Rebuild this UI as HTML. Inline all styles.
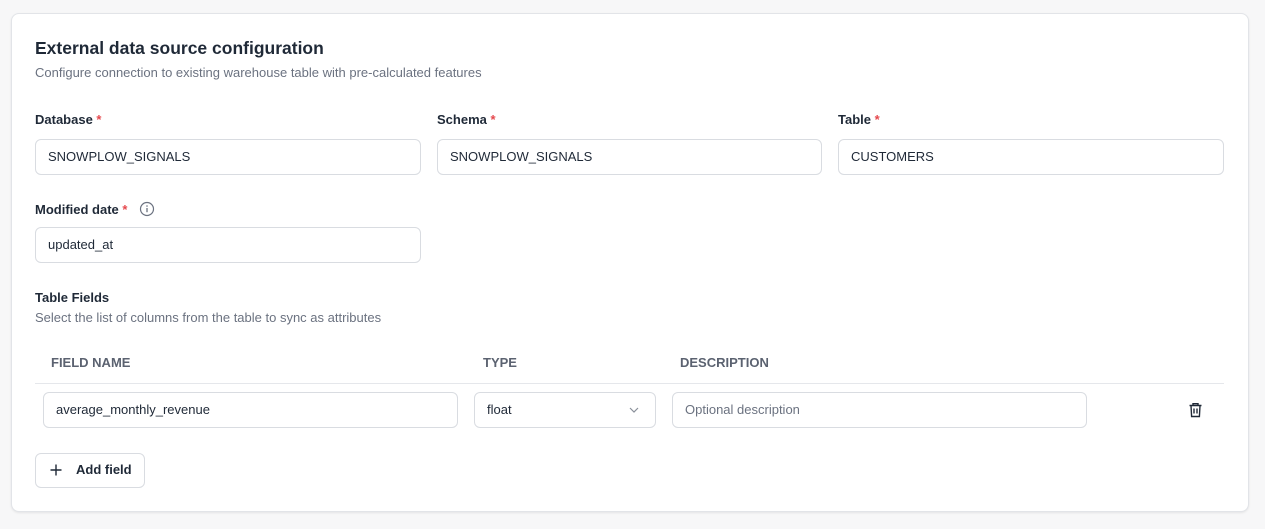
<!DOCTYPE html>
<html><head><style>
*{box-sizing:border-box;margin:0;padding:0}
body{width:1265px;height:529px;background:#f7f7f8;font-family:"Liberation Sans",sans-serif;position:relative;overflow:hidden;color:#1f2937}
.card{position:absolute;left:11px;top:13px;width:1238px;height:499px;background:#fff;border:1px solid #e2e4e8;border-radius:8px;box-shadow:0 1px 2px rgba(0,0,0,.08)}
.a{position:absolute;white-space:nowrap}
.lbl{font-size:13px;font-weight:bold;color:#1f2937}
.lbl b{color:#e5484d}
.in{position:absolute;border:1px solid #d9dce1;border-radius:6px;height:36px;font-size:13px;line-height:34px;padding-left:12px;color:#1f2937;background:#fff}
.sub{font-size:13px;color:#6b7280}
.th{font-size:13px;color:#5b6270;font-weight:600}
</style></head><body>
<div class="card"></div>
<div class="a" style="left:35px;top:38px;font-size:17.5px;font-weight:bold;color:#1f2937">External data source configuration</div>
<div class="a sub" style="left:35px;top:65px">Configure connection to existing warehouse table with pre-calculated features</div>

<div class="a lbl" style="left:35px;top:112px">Database <b>*</b></div>
<div class="a lbl" style="left:437px;top:112px">Schema <b>*</b></div>
<div class="a lbl" style="left:838px;top:112px">Table <b>*</b></div>
<div class="in" style="left:35px;top:139px;width:386px">SNOWPLOW_SIGNALS</div>
<div class="in" style="left:437px;top:139px;width:385px">SNOWPLOW_SIGNALS</div>
<div class="in" style="left:838px;top:139px;width:386px">CUSTOMERS</div>

<div class="a lbl" style="left:35px;top:202px">Modified date <b>*</b></div>
<svg class="a" style="left:139px;top:201px" width="16" height="16" viewBox="0 0 16 16"><circle cx="8" cy="8" r="6.5" fill="none" stroke="#6b7280" stroke-width="1.2"/><line x1="8" y1="7" x2="8" y2="11.2" stroke="#6b7280" stroke-width="1.3"/><circle cx="8" cy="5" r=".8" fill="#6b7280"/></svg>
<div class="in" style="left:35px;top:227px;width:386px">updated_at</div>

<div class="a lbl" style="left:35px;top:290px">Table Fields</div>
<div class="a sub" style="left:35px;top:310px">Select the list of columns from the table to sync as attributes</div>

<div class="a th" style="left:51px;top:355px">FIELD NAME</div>
<div class="a th" style="left:483px;top:355px">TYPE</div>
<div class="a th" style="left:680px;top:355px">DESCRIPTION</div>
<div class="a" style="left:35px;top:383px;width:1189px;height:1px;background:#e5e7eb"></div>

<div class="in" style="left:43px;top:392px;width:415px">average_monthly_revenue</div>
<div class="in" style="left:474px;top:392px;width:182px">float</div>
<svg class="a" style="left:629px;top:406px" width="10" height="8" viewBox="0 0 10 8"><path d="M1 2l4 4 4-4" fill="none" stroke="#8a909a" stroke-width="1.2"/></svg>
<div class="in" style="left:672px;top:392px;width:415px;color:#6b7280">Optional description</div>
<svg class="a" style="left:1188px;top:402px" width="15" height="16" viewBox="0 0 15 16"><path d="M1.5 3.5h12M5 3.5V1.7h5v1.8M3 3.5l.6 11h7.8l.6-11M6 6.5v5M9 6.5v5" fill="none" stroke="#1f2937" stroke-width="1.4"/></svg>

<div class="a" style="left:35px;top:453px;width:110px;height:35px;border:1px solid #d9dce1;border-radius:6px;background:#fff"></div>
<svg class="a" style="left:49px;top:463px" width="14" height="14" viewBox="0 0 14 14"><path d="M7 1.5v11M1.5 7h11" stroke="#1f2937" stroke-width="1.4"/></svg>
<div class="a" style="left:76px;top:462px;font-size:13px;font-weight:bold;color:#1f2937">Add field</div>
</body></html>
